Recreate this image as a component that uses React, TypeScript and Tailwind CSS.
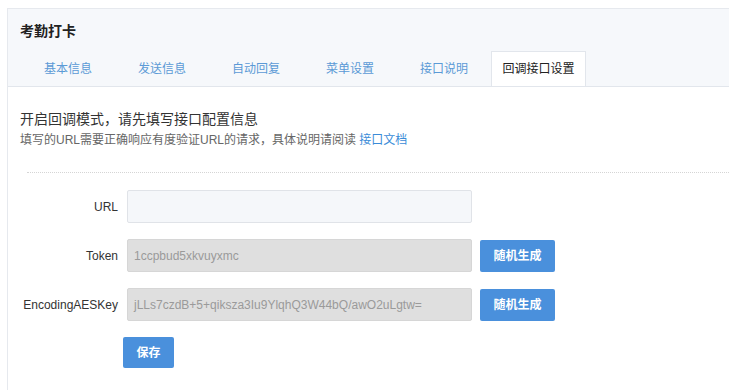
import React from "react";

const tabs = ["基本信息", "发送信息", "自动回复", "菜单设置", "接口说明", "回调接口设置"];

export default function App() {
  return (
    <div
      className="w-[729px] h-[390px] bg-white overflow-hidden pt-2 pl-[7px]"
      style={{ fontFamily: '"Liberation Sans", Arial, "Noto Sans CJK SC", sans-serif' }}
    >
      <div className="border-l border-t border-[#e6e9ee] h-full">
        <div className="bg-[#f6f8fb] border-b border-[#e2e6ec] h-[78px] flex flex-col">
          <div className="pl-[12px] pt-[12px] text-[14px] font-bold text-[#222] leading-5">考勤打卡</div>
          <div className="flex pl-[13px] mt-auto">
            {tabs.map((t, i) =>
              i === tabs.length - 1 ? (
                <div
                  key={t}
                  className="w-[95px] h-[35px] -mb-px bg-white border border-b-0 border-[#e2e6ec] flex items-center justify-center text-[12px] text-[#222]"
                >
                  {t}
                </div>
              ) : (
                <div key={t} className="w-[94px] h-[35px] flex items-center justify-center text-[12px] text-[#5b9ad6]">
                  {t}
                </div>
              )
            )}
          </div>
        </div>
        <div className="pl-[12px] pt-[22px]">
          <div className="text-[14px] text-[#333] leading-5">开启回调模式，请先填写接口配置信息</div>
          <div className="text-[12px] text-[#666] leading-4 mt-[3px]">
            填写的URL需要正确响应有度验证URL的请求，具体说明请阅读 <span className="text-[#3b8cd8]">接口文档</span>
          </div>
          <div className="ml-[7px] mt-[24px] border-t border-dotted border-[#d5d5d5]"></div>
          <div className="mt-[17px] flex flex-col gap-[16px]">
            <div className="flex items-center">
              <div className="w-[98px] text-right text-[12px] text-[#333]">URL</div>
              <div className="ml-[9px] w-[345px] h-[33px] border border-[#e0e3e8] bg-[#f5f7fa] rounded-[2px]"></div>
            </div>
            <div className="flex items-center">
              <div className="w-[98px] text-right text-[12px] text-[#333]">Token</div>
              <div className="ml-[9px] w-[345px] h-[33px] border border-[#d6d6d6] bg-[#dfdfdf] rounded-[2px] flex items-center px-[6px] text-[12px] text-[#9a9a9a]">
                1ccpbud5xkvuyxmc
              </div>
              <div className="ml-[8px] w-[75px] h-[32px] bg-[#4a90dc] rounded-[2px] text-white text-[12px] font-bold flex items-center justify-center">
                随机生成
              </div>
            </div>
            <div className="flex items-center">
              <div className="w-[98px] text-right text-[12px] text-[#333]">EncodingAESKey</div>
              <div className="ml-[9px] w-[345px] h-[33px] border border-[#d6d6d6] bg-[#dfdfdf] rounded-[2px] flex items-center px-[6px] text-[12px] text-[#9a9a9a] whitespace-nowrap overflow-hidden">
                jLLs7czdB+5+qiksza3Iu9YlqhQ3W44bQ/awO2uLgtw=
              </div>
              <div className="ml-[8px] w-[75px] h-[32px] bg-[#4a90dc] rounded-[2px] text-white text-[12px] font-bold flex items-center justify-center">
                随机生成
              </div>
            </div>
            <div className="flex">
              <div className="ml-[103px] w-[51px] h-[31px] bg-[#4a90dc] rounded-[2px] text-white text-[12px] font-bold flex items-center justify-center">
                保存
              </div>
            </div>
          </div>
        </div>
      </div>
    </div>
  );
}
